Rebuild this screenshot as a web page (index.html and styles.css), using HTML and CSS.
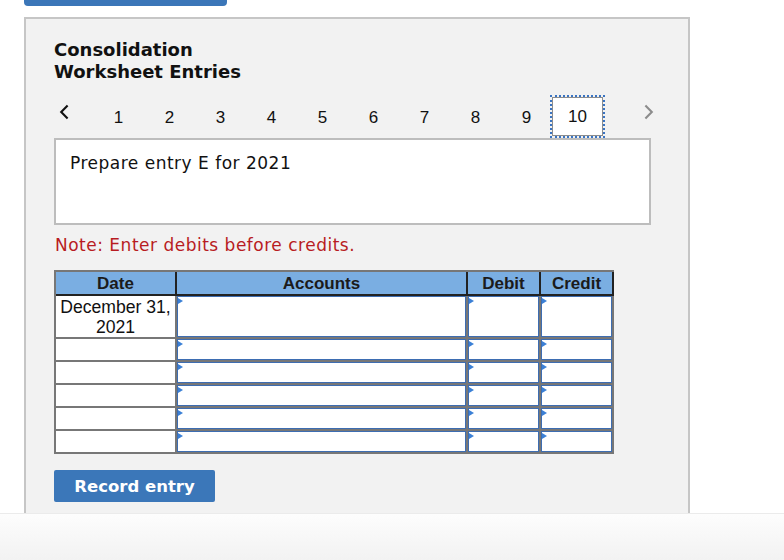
FILE: index.html
```html
<!DOCTYPE html>
<html lang="en">
<head>
<meta charset="utf-8">
<title>Consolidation Worksheet Entries</title>
<link rel="stylesheet" href="styles.css">
</head>
<body>
<div class="page">
  <div class="topbar"></div>
  <section class="panel">
    <h2 class="title">Consolidation<br>Worksheet Entries</h2>
    <nav class="pager">
      <span class="chev prev"><svg width="10" height="16" viewBox="0 0 10 16"><path d="M8.6 1.4 L2.2 8 L8.6 14.6" fill="none" stroke="#111" stroke-width="2.1"/></svg></span>
      <span class="pg">1</span>
      <span class="pg">2</span>
      <span class="pg">3</span>
      <span class="pg">4</span>
      <span class="pg">5</span>
      <span class="pg">6</span>
      <span class="pg">7</span>
      <span class="pg">8</span>
      <span class="pg">9</span>
      <span class="pg active">10</span>
      <span class="chev next"><svg width="10" height="16" viewBox="0 0 10 16"><path d="M1.4 1.4 L7.8 8 L1.4 14.6" fill="none" stroke="#8c8c8c" stroke-width="2.1"/></svg></span>
    </nav>
    <div class="question">Prepare entry E for 2021</div>
    <p class="note">Note: Enter debits before credits.</p>
    <div class="journal">
      <div class="jhead">
        <div class="th">Date</div>
        <div class="th">Accounts</div>
        <div class="th">Debit</div>
        <div class="th">Credit</div>
      </div>
      <div class="jbody">
        <div class="date">December 31,<br>2021</div>
        <div class="inp"></div><div class="inp"></div><div class="inp"></div>
        <div class="date"></div>
        <div class="inp"></div><div class="inp"></div><div class="inp"></div>
        <div class="date"></div>
        <div class="inp"></div><div class="inp"></div><div class="inp"></div>
        <div class="date"></div>
        <div class="inp"></div><div class="inp"></div><div class="inp"></div>
        <div class="date"></div>
        <div class="inp"></div><div class="inp"></div><div class="inp"></div>
        <div class="date"></div>
        <div class="inp"></div><div class="inp"></div><div class="inp"></div>
      </div>
    </div>
    <button class="record" type="button">Record entry</button>
  </section>
</div>
<footer class="footer"></footer>
</body>
</html>
```

FILE: styles.css
```css
* { box-sizing: border-box; }
html, body { margin: 0; padding: 0; height: 100%; overflow: hidden; background: #fff; }
body { font-family: "DejaVu Sans", Verdana, sans-serif; color: #111; }

.page { padding-left: 24px; }

.topbar {
  width: 203px;
  height: 6px;
  background: #3b76b8;
  border-radius: 0 0 4px 4px;
  margin-bottom: 11px;
}

.panel {
  width: 666px;
  height: 543px;
  background: #f2f2f2;
  border: 2px solid #c6c6c6;
  padding: 20px 0 0 28px;
}

.title {
  margin: 0;
  font: bold 18px/22px "DejaVu Sans", Verdana, sans-serif;
  color: #111;
}

.pager {
  display: flex;
  align-items: center;
  height: 43px;
  margin-top: 12px;
  font: 17px/20px "Liberation Sans", Arial, sans-serif;
  color: #111;
}
.chev { display: flex; align-items: center; height: 16px; margin-top: -10px; }
.prev { margin-left: 5px; margin-right: 24px; }
.next { margin-left: 41px; }
.pg {
  width: 51px;
  text-align: center;
  padding-top: 2px;
}
.pg.active {
  height: 39px;
  line-height: 35px;
  padding-top: 1px;
  background: #fff;
  border: 1px solid #8d8d8d;
  outline: 2px dotted #3a74c2;
}

.question {
  width: 597px;
  height: 87px;
  background: #fff;
  border: 2px solid #bdbdbd;
  padding: 13px 14px;
  font: 17px/20px "DejaVu Sans", Verdana, sans-serif;
  letter-spacing: 0.5px;
  color: #111;
}

.note {
  margin: 10px 0 0 1px;
  font: 17px/20px "DejaVu Sans", Verdana, sans-serif;
  letter-spacing: 0.5px;
  color: #b81c22;
}

.journal {
  width: 560px;
  margin-top: 15px;
  border-left: 2px solid #777;
  border-top: 2px solid #777;
  border-bottom: 2px solid #777;
}
.jhead {
  display: grid;
  grid-template-columns: 119px 289px 71px 71px;
  column-gap: 2px;
  background: #222;
  border-right: 2px solid #222;
  border-bottom: 2px solid #222;
}
.th {
  background: #7aaee2;
  height: 22px;
  text-align: center;
  font: bold 17px/23px "Liberation Sans", Arial, sans-serif;
  color: #1b1b1b;
}
.jbody {
  display: grid;
  grid-template-columns: 119px 289px 71px 71px;
  grid-template-rows: 41px repeat(5, 21px);
  gap: 2px;
  background: #777;
  border-right: 2px solid #777;
}
.date {
  background: #fff;
  text-align: center;
  font: 17.6px/20px "Liberation Sans", Arial, sans-serif;
  color: #111;
  padding-top: 1px;
}
.inp {
  position: relative;
  background: #fff;
  border: 1px solid #3d6db2;
}
.inp::before {
  content: "";
  position: absolute;
  left: 0;
  top: 1px;
  border-left: 5px solid #3b80d6;
  border-top: 3px solid transparent;
  border-bottom: 3px solid transparent;
}

.record {
  display: block;
  margin-top: 16px;
  width: 161px;
  height: 32px;
  background: #3b77b9;
  color: #fff;
  border: 0;
  border-radius: 2px;
  font: bold 16.5px/33px "DejaVu Sans", Verdana, sans-serif;
  padding: 0;
}

.footer {
  position: fixed;
  left: 0;
  right: 0;
  bottom: 0;
  height: 47px;
  background: linear-gradient(#fdfdfd, #f2f2f2);
  border-top: 1px solid #ebebeb;
}
```
